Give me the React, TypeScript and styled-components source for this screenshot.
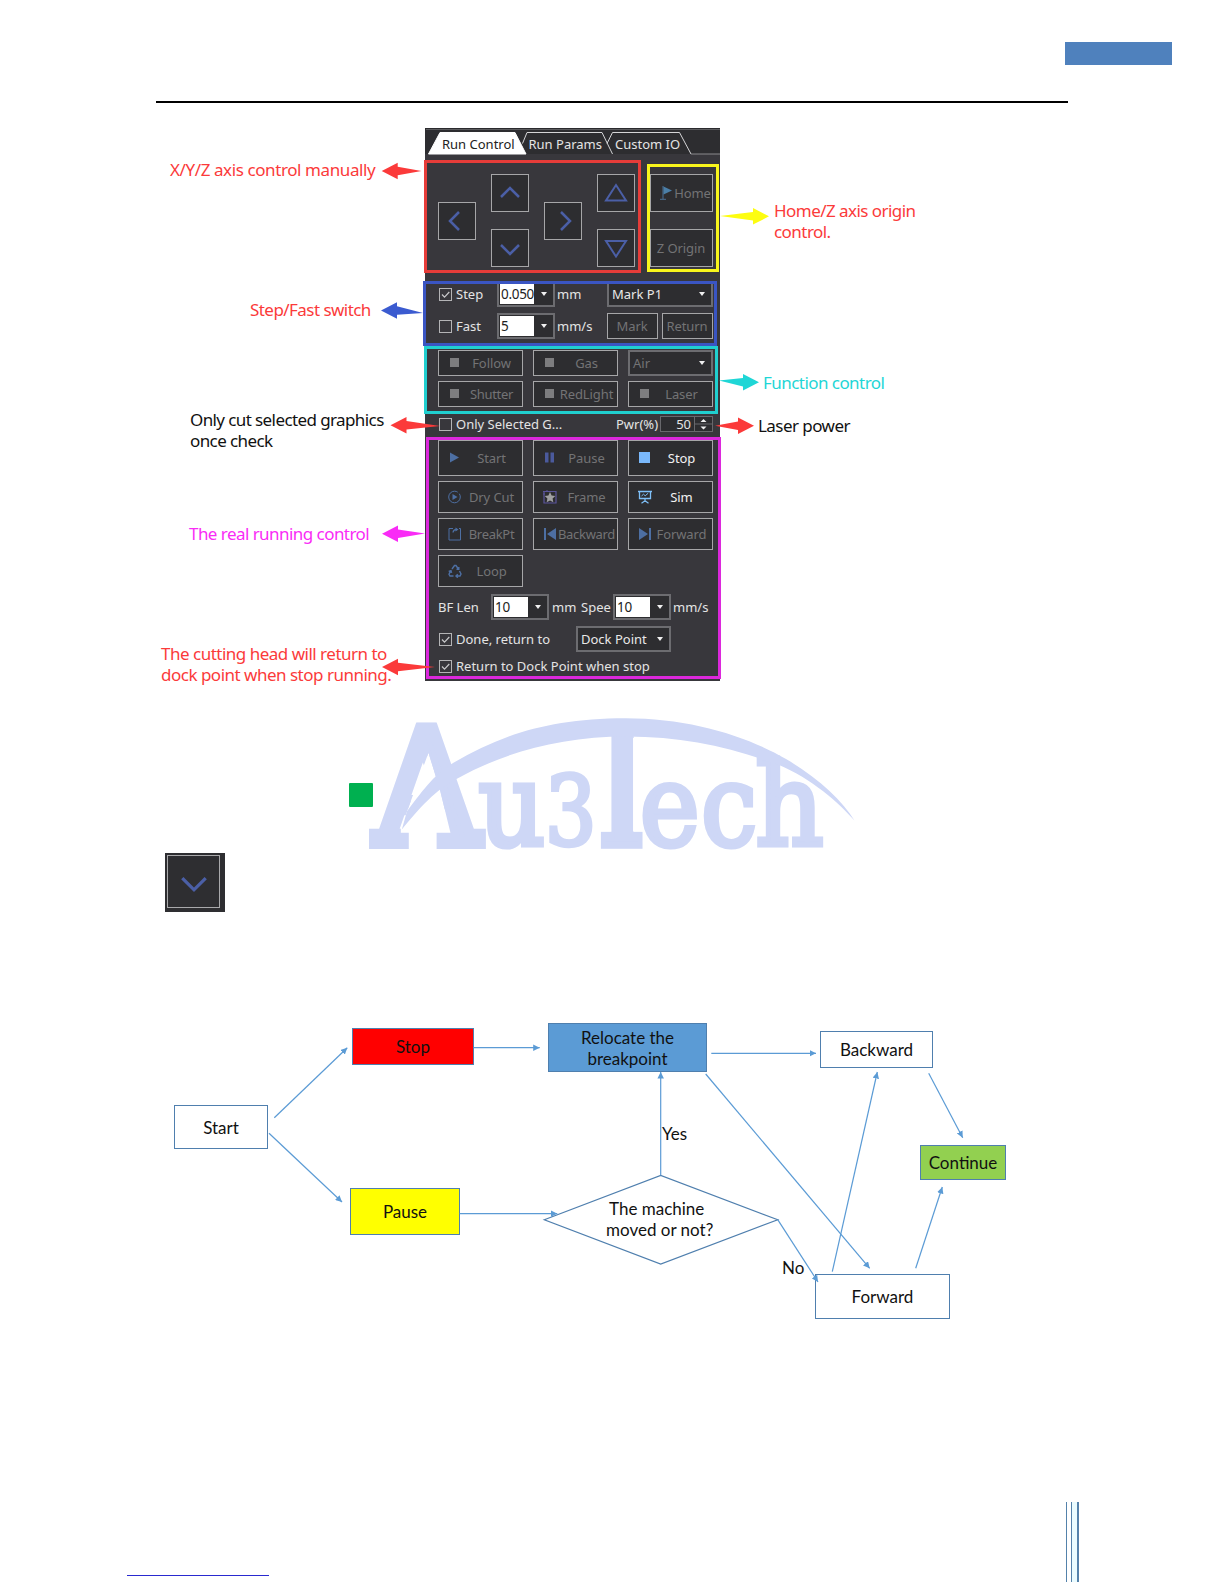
import type { ReactNode } from "react";
import styled, { createGlobalStyle } from "styled-components";

const RED = "#fb3a3a";
const BLUE = "#3b5bd0";
const CYAN = "#1fd6d6";
const MAGENTA = "#f92bf6";
const EDGE = "#5b9bd5";
const OUTLINE = "#4f7fae";
const DIM_ICON = "#4d6fa3";
const LOGO = "#ced7f6";

const GlobalStyle = createGlobalStyle`
  body {
    margin: 0;
    background: #fff;
  }
  * {
    box-sizing: border-box;
  }
`;

/* ---------- page ---------- */

const Page = styled.main`
  width: 1224px;
  height: 1584px;
  display: flex;
  flex-direction: column;
  background: #fff;
  overflow: hidden;
  font-family: "Noto Sans", sans-serif;
`;

const Header = styled.header`
  height: 128px;
  padding: 42px 52px 0 156px;
  display: flex;
  flex-direction: column;
`;

const HeaderTag = styled.div`
  width: 107px;
  height: 23px;
  align-self: flex-end;
  background: #4f81bd;
`;

const HeaderRule = styled.div`
  width: 912px;
  height: 2px;
  margin-top: 36px;
  background: #000;
`;

/* ---------- annotated panel ---------- */

const Figure = styled.section`
  position: relative;
  height: 572px;
  display: grid;
  grid-template-columns: 425px 295px 1fr;
  align-items: start;
`;

const Notes = styled.div`
  display: flex;
  flex-direction: column;
`;

const Note = styled.p<{ $gap: number; $indent: number; $color?: string; $spacing?: number }>`
  margin: ${({ $gap }) => $gap}px 0 0 ${({ $indent }) => $indent}px;
  color: ${({ $color }) => $color || "#111"};
  font-family: "Noto Sans", sans-serif;
  font-size: 17px;
  line-height: 21px;
  letter-spacing: ${({ $spacing }) => $spacing ?? -0.55}px;
  white-space: pre;
`;

const Overlay = styled.svg`
  position: absolute;
  left: 0;
  top: 0;
  pointer-events: none;
`;

const Frame = styled.div<{ $x: number; $y: number; $w: number; $h: number; $color: string }>`
  position: absolute;
  left: ${({ $x }) => $x}px;
  top: ${({ $y }) => $y}px;
  width: ${({ $w }) => $w}px;
  height: ${({ $h }) => $h}px;
  border: 3px solid ${({ $color }) => $color};
`;

const Panel = styled.div`
  position: relative;
  height: 553px;
  background: #38373c;
  color: #e4e4e4;
  font-size: 13px;
  line-height: 20px;
  display: flex;
  flex-direction: column;
  white-space: nowrap;
`;

const TabBar = styled.div`
  position: relative;
  height: 26px;
  flex: none;
  border-top: 1px solid #2b2b2e;
  background: #2d2d30;
  display: flex;
  padding-left: 17px;
`;

const TabShape = styled.svg`
  position: absolute;
  left: 0;
  top: -1px;
`;

const Tab = styled.span<{ $active?: boolean; $width: number }>`
  position: relative;
  width: ${({ $width }) => $width}px;
  padding-top: 5px;
  color: ${({ $active }) => ($active ? "#222" : "#e4e4e4")};
`;

const Body = styled.div`
  flex: 1;
  padding: 20px 7px 0 13px;
`;

const Jog = styled.div`
  display: grid;
  grid-template-columns: repeat(4, 38px) 63px;
  grid-template-rows: 38px 38px;
  grid-auto-flow: column;
  column-gap: 15px;
  row-gap: 17px;
`;

const Box = styled.button<{
  $lit?: boolean;
  $w?: number;
  $h?: number;
  $pad?: number;
  $tall?: boolean;
}>`
  width: ${({ $w }) => ($w ? `${$w}px` : "auto")};
  height: ${({ $h }) => $h ?? 38}px;
  min-width: 0;
  padding: 0 1px 0 ${({ $pad }) => $pad ?? 0}px;
  border: 1px solid #a6a6a8;
  background: #2d2d30;
  color: ${({ $lit }) => ($lit ? "#f2f2f2" : "#737375")};
  font: inherit;
  display: flex;
  align-items: center;
  justify-content: center;
  ${({ $tall }) => $tall && "grid-row: 1 / 3; align-self: center;"}
`;

const BoxText = styled.span<{ $spacing?: number }>`
  flex: 1;
  text-align: center;
  letter-spacing: ${({ $spacing }) => $spacing ?? -0.1}px;
`;

const Line = styled.div<{ $h: number; $gap?: number }>`
  height: ${({ $h }) => $h}px;
  margin-top: ${({ $gap }) => $gap ?? 0}px;
  display: flex;
  align-items: center;
`;

const Cell = styled.div<{ $w: number }>`
  width: ${({ $w }) => $w}px;
  flex: none;
  display: flex;
  align-items: center;
`;

const CheckBox = styled.span`
  width: 13px;
  height: 13px;
  margin: 0 4px 0 1px;
  flex: none;
  border: 1px solid #b4b4b6;
  display: flex;
`;

const Combo = styled.div<{ $w: number; $dim?: boolean }>`
  width: ${({ $w }) => $w}px;
  height: 26px;
  flex: none;
  border: 2px solid #6c6c70;
  background: #2d2d30;
  color: ${({ $dim }) => ($dim ? "#737375" : "#e8e8e8")};
  display: flex;
  align-items: center;
  justify-content: space-between;
  padding-right: 6px;
`;

const ComboInput = styled.span`
  width: 34px;
  height: 20px;
  margin-left: 1px;
  padding-left: 1px;
  background: #fff;
  color: #222;
  font-size: 13.5px;
  line-height: 21px;
  letter-spacing: -0.3px;
`;

const ComboText = styled.span`
  padding-left: 3px;
`;

const Caret = styled.i`
  border: 3px solid transparent;
  border-top: 4px solid #f0f0f0;
  border-bottom: 0;
`;

const ButtonGrid = styled.div<{ $gap: number; $top: number }>`
  margin-top: ${({ $top }) => $top}px;
  display: grid;
  grid-template-columns: repeat(3, 85px);
  column-gap: 10px;
  row-gap: ${({ $gap }) => $gap}px;
`;

const Spinner = styled.div`
  width: 53px;
  height: 16px;
  border: 1px solid #68686c;
  background: #2d2d30;
  display: flex;
`;

const SpinnerValue = styled.span`
  flex: 1;
  padding-right: 3px;
  border-right: 1px solid #68686c;
  text-align: right;
  line-height: 15px;
`;

const SpinnerArrows = styled.svg`
  width: 17px;
  height: 14px;
`;

/* ---------- logo and tile ---------- */

const LogoRow = styled.section`
  height: 153px;
  padding-left: 349px;
  display: flex;
`;

const GreenSquare = styled.div`
  width: 24px;
  height: 24px;
  flex: none;
  margin-top: 83px;
  border-radius: 1px;
  background: #00b050;
`;

const LogoArt = styled.svg`
  flex: none;
  margin-left: -4px;
`;

const Tile = styled.div`
  width: 60px;
  height: 59px;
  margin-left: 165px;
  padding: 2px;
  background: #2e2e31;
`;

const TileInner = styled.div`
  width: 53px;
  height: 53px;
  border: 1.5px solid #a9a9ab;
  display: flex;
  align-items: center;
  justify-content: center;
`;

/* ---------- flow chart ---------- */

const Chart = styled.section`
  position: relative;
  width: 1224px;
  height: 340px;
  margin-top: 98px;
  font-family: Lato, sans-serif;
  font-size: 17px;
  line-height: 21px;
  color: #111;
`;

const Node = styled.div<{ $x: number; $y: number; $w: number; $h: number; $fill?: string }>`
  position: absolute;
  left: ${({ $x }) => $x}px;
  top: ${({ $y }) => $y}px;
  width: ${({ $w }) => $w}px;
  height: ${({ $h }) => $h}px;
  border: 1px solid ${OUTLINE};
  background: ${({ $fill }) => $fill || "#fff"};
  display: flex;
  align-items: center;
  justify-content: center;
  text-align: center;
  white-space: pre;
`;

const EdgeLabel = styled.span<{ $x: number; $y: number }>`
  position: absolute;
  left: ${({ $x }) => $x}px;
  top: ${({ $y }) => $y}px;
  white-space: pre;
`;

/* ---------- footer ---------- */

const Footer = styled.footer`
  flex: 1;
  display: flex;
  align-items: flex-end;
  justify-content: space-between;
  padding: 0 145px 2px 127px;
`;

const FootRule = styled.div`
  width: 142px;
  height: 1px;
  margin-bottom: 6px;
  background: #2a2ad0;
`;

const Bars = styled.div`
  width: 13px;
  height: 80px;
  border: solid #5482ab;
  border-width: 0 2px 0 1px;
  display: flex;
  justify-content: flex-end;
  &::before {
    content: "";
    width: 5px;
    border-left: 1px solid #5482ab;
    background: #eafcff;
  }
`;

/* ---------- icons ---------- */

const IconSvg = styled.svg`
  width: 14px;
  height: 14px;
  flex: none;
`;

const Icon = ({ children }: { children: ReactNode }) => (
  <IconSvg viewBox="0 0 14 14" fill="none" stroke={DIM_ICON}>
    {children}
  </IconSvg>
);

const CHEVRONS = {
  left: "M12 1 3 10l9 9",
  right: "M8 1l9 9-9 9",
  up: "M1 14l9-9 9 9",
  down: "M1 7l9 9 9-9",
};

const Chevron = ({ dir, size = 20 }: { dir: keyof typeof CHEVRONS; size?: number }) => (
  <svg width={size} height={size} viewBox="0 0 20 20" fill="none">
    <path d={CHEVRONS[dir]} stroke="#4b5fa6" strokeWidth={2.5} />
  </svg>
);

const Triangle = ({ down }: { down?: boolean }) => (
  <svg width="24" height="20" viewBox="0 0 24 20" fill="none" stroke="#4b5fa6" strokeWidth={2}>
    <path d={down ? "M2 3h20L12 18.500z" : "M2 17.500h20L12 2z"} />
  </svg>
);

const icons = {
  square: (
    <Icon>
      <path d="M2 2h9v9H2z" fill="#7d7d7f" stroke="none" />
    </Icon>
  ),
  start: (
    <Icon>
      <path d="M2 1.500l9 5-9 5z" fill={DIM_ICON} stroke="none" />
    </Icon>
  ),
  pause: (
    <Icon>
      <path d="M2 1.500h3.500v10H2zM7.500 1.500H11v10H7.500z" fill="#4b5a9c" stroke="none" />
    </Icon>
  ),
  stop: (
    <Icon>
      <path d="M1 1h11v11H1z" fill="#7ab8fb" stroke="none" />
    </Icon>
  ),
  dry: (
    <Icon>
      <circle cx="6.500" cy="7" r="5.800" strokeDasharray="30 2" />
      <path d="M4.500 4l5 3-5 3z" fill={DIM_ICON} stroke="none" />
    </Icon>
  ),
  frame: (
    <Icon>
      <path d="M1 1.500h12v11.500H1z" stroke="#5b559b" strokeWidth="1.200" />
      <path d="M0 4h2M0 1.500h2M4 0v2" stroke="#5b559b" />
      <path
        d="M7 2l1.600 3.400 3.700.5-2.700 2.600.7 3.700L7 10.400l-3.300 1.800.7-3.700-2.700-2.600 3.700-.5z"
        fill="#a0a0a2"
        stroke="none"
      />
    </Icon>
  ),
  sim: (
    <Icon>
      <g stroke="#7fc0f8">
        <path d="M0 1.500h14M1.500 1.500v7h11v-7M7 8.500v3M3.500 13.200L7 10.800l3.500 2.400" strokeWidth="1.300" />
        <path d="M3.500 6l2-1.800 1.700 1.600 3-2.600" />
      </g>
    </Icon>
  ),
  breakPt: (
    <Icon>
      <path d="M5 1.500H1v11.500h11.500V1.500H11" />
      <path d="M5 5.500c.3-2 1.500-3 3.500-3" strokeWidth="1.300" />
      <path d="M7.500.5l3 2-3 2z" fill={DIM_ICON} stroke="none" />
    </Icon>
  ),
  backward: (
    <Icon>
      <path d="M1 1h2v12H1zM13 1v12L4 7z" fill={DIM_ICON} stroke="none" />
    </Icon>
  ),
  forward: (
    <Icon>
      <path d="M11 1h2v12h-2zM1 1v12l9-6z" fill={DIM_ICON} stroke="none" />
    </Icon>
  ),
  loop: (
    <Icon>
      <path
        d="M4 5l2.500-3.500h1.500L10 4.500M10.800 3v2.200H8.500M11.500 7l1.500 3-1 2H8.500M9.800 10.300L8 12l1.800 1.700M5.500 12H2L1 10.300 2.700 7M.7 7.500L3 6.700l.6 2.200"
        strokeWidth="1.400"
      />
    </Icon>
  ),
  flag: (
    <Icon>
      <path d="M3 0v13M0 13.300h6" stroke="#4b7196" />
      <path d="M3.500.5l8.500 4-8.500 4z" fill="#4b7fa8" stroke="none" />
    </Icon>
  ),
};

/* ---------- small parts ---------- */

type ActionProps = {
  icon: keyof typeof icons;
  label: string;
  h?: number;
  lit?: boolean;
  spacing?: number;
};

const Action = ({ icon, label, h = 32, lit, spacing }: ActionProps) => (
  <Box $h={h} $pad={9} $lit={lit}>
    {icons[icon]}
    <BoxText $spacing={spacing}>{label}</BoxText>
  </Box>
);

const Check = ({ label, checked }: { label: string; checked?: boolean }) => (
  <>
    <CheckBox>
      {checked && (
        <svg width="11" height="11" viewBox="0 0 11 11" fill="none">
          <path d="M2 5.500l2.500 2.700L9.300 3" stroke="#c9c9cb" strokeWidth="1.200" />
        </svg>
      )}
    </CheckBox>
    {label}
  </>
);

const NumberCombo = ({ value }: { value: string }) => (
  <Combo $w={58}>
    <ComboInput>{value}</ComboInput>
    <Caret />
  </Combo>
);

type PointerProps = { tip: [number, number]; tail: [number, number]; color: string };

// Tapered callout arrow, wide at the head and thin at the tail
const Pointer = ({ tip, tail, color }: PointerProps) => {
  const dir = Math.sign(tail[0] - tip[0]);
  const neck = tip[0] + dir * 16;
  const y = tip[1];
  const points = [
    tip,
    [neck, y - 8.3],
    [neck, y - 4.3],
    tail,
    [neck, y + 4.3],
    [neck, y + 8.3],
  ];
  return <polygon points={points.map((p) => p.join(",")).join(" ")} fill={color} />;
};

const edges = [
  [274.3, 1117.7, 347.3, 1047.7],
  [269, 1133.3, 342, 1202],
  [473.7, 1047.7, 539.7, 1047.7],
  [459.7, 1213.7, 557.3, 1213.7],
  [711.3, 1053.3, 816, 1053.3],
  [660.7, 1175.3, 660.7, 1072],
  [705.7, 1074, 869.7, 1268.3],
  [777.7, 1219.7, 818, 1282],
  [832.3, 1271.7, 877.3, 1072],
  [915.7, 1268.3, 942.3, 1187],
  [928.7, 1073.3, 962.7, 1137.7],
];

type LetterProps = {
  x: number;
  y?: number;
  sx: number;
  sy: number;
  clip?: string;
  bold?: boolean;
  weight?: number;
  children: string;
};

const Letter = ({ x, y = 143.5, sx, sy, clip, bold, weight = 4.5, children }: LetterProps) => (
  <g clipPath={clip} fontWeight={bold ? 700 : 400} strokeWidth={weight}>
    <text transform={`translate(${x} ${y}) scale(${sx} ${sy})`}>{children}</text>
  </g>
);

// The arch runs through the A as its crossbar and forms the top of the T
const Logo = () => (
  <LogoArt width="497" height="162" viewBox="29 0 490 160">
    <clipPath id="stem">
      <path d="M268 20h22v110h20v20h-60v-20h18z" />
    </clipPath>
    <clipPath id="legs">
      <path clipRule="evenodd" d="M20 22h135v128H20zM87.300 52L60 127V131H109L99 90z" />
    </clipPath>
    <g fill={LOGO} stroke={LOGO} fontFamily="'DejaVu Serif', serif" fontSize="100">
      <Letter x={34} y={141.5} sx={1.43} sy={1.57} clip="url(#legs)" weight={7.5}>A</Letter>
      <Letter x={136.500} sx={1.03} sy={1.14}>u</Letter>
      <Letter x={202.500} sx={0.8} sy={0.94}>3</Letter>
      <Letter x={242.500} sx={0.96} sy={1.65} clip="url(#stem)" bold>T</Letter>
      <Letter x={296} sx={1} sy={1.13}>e</Letter>
      <Letter x={356.500} sx={0.99} sy={1.13}>c</Letter>
      <Letter x={410} sx={1.05} sy={1.13}>h</Letter>
    </g>
    <path
      fill={LOGO}
      d="M66 110C84 86 95 72 112 62C160 34 208 18 282 18C345 18 400 35 440 58C472 77 496 99 508 119C492 101 466 78 433 64C384 46 338 36 283 36C215 36 160 53 115 78C96 87 77 108 61 128z"
    />
  </LogoArt>
);

/* ---------- sections ---------- */

const RunPanel = () => (
  <Panel>
    <TabBar>
      <TabShape width="295" height="27" fill="none" stroke="#d5d5d7">
        <path d="M1 1.500h294" stroke="#5b5b5e" />
        <path d="M3.500 26L15 4.500h75L101 26z" fill="#fff" stroke="#fff" />
        <path d="M97.500 15.500l4.500-11h75L187.500 26M182 15.500l5.500-11h67L266 26" />
        <path d="M266 26h29" stroke="#8a8a8c" />
      </TabShape>
      <Tab $active $width={86.500}>Run Control</Tab>
      <Tab $width={86.500}>Run Params</Tab>
      <Tab $width={70}>Custom IO</Tab>
    </TabBar>
    <Body>
      <Jog>
        <Box $tall><Chevron dir="left" /></Box>
        <Box><Chevron dir="up" /></Box>
        <Box><Chevron dir="down" /></Box>
        <Box $tall><Chevron dir="right" /></Box>
        <Box><Triangle /></Box>
        <Box><Triangle down /></Box>
        <Box $pad={9}>
          {icons.flag}
          <BoxText>Home</BoxText>
        </Box>
        <Box><BoxText>Z Origin</BoxText></Box>
      </Jog>

      <Line $h={26} $gap={14}>
        <Cell $w={59}><Check label="Step" checked /></Cell>
        <Cell $w={60}><NumberCombo value="0.050" /></Cell>
        <Cell $w={50}>mm</Cell>
        <Combo $w={106}>
          <ComboText>Mark P1</ComboText>
          <Caret />
        </Combo>
      </Line>
      <Line $h={26} $gap={6}>
        <Cell $w={59}><Check label="Fast" /></Cell>
        <Cell $w={60}><NumberCombo value="5" /></Cell>
        <Cell $w={50}>mm/s</Cell>
        <Cell $w={55}><Box $w={51} $h={26}><BoxText>Mark</BoxText></Box></Cell>
        <Box $w={51} $h={26}><BoxText>Return</BoxText></Box>
      </Line>

      <ButtonGrid $gap={5} $top={11}>
        <Action icon="square" label="Follow" h={26} />
        <Action icon="square" label="Gas" h={26} />
        <Combo $w={85} $dim>
          <ComboText>Air</ComboText>
          <Caret />
        </Combo>
        <Action icon="square" label="Shutter" h={26} spacing={-0.3} />
        <Action icon="square" label="RedLight" h={26} />
        <Action icon="square" label="Laser" h={26} />
      </ButtonGrid>

      <Line $h={20} $gap={7}>
        <Cell $w={178}><Check label="Only Selected G..." /></Cell>
        <Cell $w={44}>Pwr(%)</Cell>
        <Spinner>
          <SpinnerValue>50</SpinnerValue>
          <SpinnerArrows viewBox="0 0 17 14">
            <path d="M5.500 5L8.500 2l3 3zM5.500 9.500h6l-3 3z" fill="#f0f0f0" />
            <path d="M0 7h17" stroke="#68686c" />
          </SpinnerArrows>
        </Spinner>
      </Line>

      <ButtonGrid $gap={5} $top={6}>
        <Action icon="start" label="Start" h={36} />
        <Action icon="pause" label="Pause" h={36} />
        <Action icon="stop" label="Stop" h={36} lit />
        <Action icon="dry" label="Dry Cut" />
        <Action icon="frame" label="Frame" />
        <Action icon="sim" label="Sim" lit />
        <Action icon="breakPt" label="BreakPt" spacing={-0.3} />
        <Action icon="backward" label="Backward" spacing={-0.3} />
        <Action icon="forward" label="Forward" />
        <Action icon="loop" label="Loop" />
      </ButtonGrid>

      <Line $h={26} $gap={7}>
        <Cell $w={53}>BF Len</Cell>
        <Cell $w={61}><NumberCombo value="10" /></Cell>
        <Cell $w={29}>mm</Cell>
        <Cell $w={32}>Spee</Cell>
        <Cell $w={60}><NumberCombo value="10" /></Cell>
        mm/s
      </Line>
      <Line $h={26} $gap={6}>
        <Cell $w={138}><Check label="Done, return to" checked /></Cell>
        <Combo $w={95}>
          <ComboText>Dock Point</ComboText>
          <Caret />
        </Combo>
      </Line>
      <Line $h={20} $gap={4}>
        <Check label="Return to Dock Point when stop" checked />
      </Line>
    </Body>
  </Panel>
);

const FlowChart = () => (
  <Chart>
    <Node $x={174} $y={95} $w={94} $h={44}>Start</Node>
    <Node $x={352} $y={18} $w={122} $h={37} $fill="#ff0000">Stop</Node>
    <Node $x={350} $y={178} $w={110} $h={47} $fill="#ffff00">Pause</Node>
    <Node $x={548} $y={13} $w={159} $h={49} $fill="#5b9bd5">{"Relocate the\nbreakpoint"}</Node>
    <Node $x={820} $y={21} $w={113} $h={37}>Backward</Node>
    <Node $x={920} $y={135} $w={86} $h={35} $fill="#92d050">Continue</Node>
    <Node $x={815} $y={264} $w={135} $h={45}>Forward</Node>
    <Overlay width="1224" height="340" viewBox="0 1010 1224 340">
      <defs>
        <marker
          id="head"
          viewBox="0 0 6 6"
          refX="6"
          refY="3"
          markerWidth="6.500"
          markerHeight="6.500"
          markerUnits="userSpaceOnUse"
          orient="auto"
        >
          <path d="M0 0l6 3-6 3z" fill={EDGE} />
        </marker>
      </defs>
      <path
        d="M544.300 1219.700L660.700 1175.500L777.700 1219.700L660.700 1264z"
        fill="none"
        stroke={OUTLINE}
        strokeWidth="1.200"
      />
      {edges.map(([x1, y1, x2, y2]) => (
        <line
          key={`${x1}-${y1}`}
          x1={x1}
          y1={y1}
          x2={x2}
          y2={y2}
          stroke={EDGE}
          strokeWidth="1.200"
          markerEnd="url(#head)"
        />
      ))}
    </Overlay>
    <EdgeLabel $x={609} $y={188}>The machine</EdgeLabel>
    <EdgeLabel $x={606} $y={209}>moved or not?</EdgeLabel>
    <EdgeLabel $x={662} $y={113}>Yes</EdgeLabel>
    <EdgeLabel $x={782} $y={247}>No</EdgeLabel>
  </Chart>
);

const App = () => {
  return (
    <Page>
      <GlobalStyle />
      <Header>
        <HeaderTag />
        <HeaderRule />
      </Header>

      <Figure>
        <Notes>
          <Note $gap={31} $indent={170} $color={RED} $spacing={-0.4}>X/Y/Z axis control manually</Note>
          <Note $gap={119} $indent={250} $color={RED}>Step/Fast switch</Note>
          <Note $gap={89} $indent={190} $spacing={-0.6}>{"Only cut selected graphics\nonce check"}</Note>
          <Note $gap={72} $indent={189} $color={MAGENTA}>The real running control</Note>
          <Note $gap={99} $indent={161} $color={RED} $spacing={-0.5}>
            {"The cutting head will return to\ndock point when stop running."}
          </Note>
        </Notes>
        <RunPanel />
        <Notes>
          <Note $gap={72} $indent={54} $color={RED}>{"Home/Z axis origin\ncontrol."}</Note>
          <Note $gap={130} $indent={43} $color={CYAN}>Function control</Note>
          <Note $gap={22} $indent={38}>Laser power</Note>
        </Notes>

        <Frame $x={424} $y={32} $w={217} $h={113} $color="#e63c39" />
        <Frame $x={647} $y={36} $w={72} $h={108} $color="#f8f51c" />
        <Frame $x={423} $y={153} $w={294} $h={65} $color="#3a55c3" />
        <Frame $x={424} $y={218} $w={294} $h={68} $color="#20cfcf" />
        <Frame $x={426} $y={309} $w={295} $h={242} $color="#dc28dc" />
        <Overlay width="1224" height="572" viewBox="0 128 1224 572">
          <Pointer tip={[381.7, 171]} tail={[421.5, 171]} color={RED} />
          <Pointer tip={[381, 310.5]} tail={[423, 313]} color={BLUE} />
          <Pointer tip={[390.5, 425.3]} tail={[440, 426]} color={RED} />
          <Pointer tip={[382, 533.7]} tail={[425, 533.5]} color={MAGENTA} />
          <Pointer tip={[382, 667]} tail={[435, 667]} color={RED} />
          <Pointer tip={[769, 216.3]} tail={[720, 216]} color="#fdfd10" />
          <Pointer tip={[759, 382.2]} tail={[719, 380.5]} color={CYAN} />
          <Pointer tip={[754, 425.7]} tail={[715, 425.7]} color={RED} />
        </Overlay>
      </Figure>

      <LogoRow>
        <GreenSquare />
        <Logo />
      </LogoRow>
      <Tile>
        <TileInner><Chevron dir="down" size={26} /></TileInner>
      </Tile>

      <FlowChart />

      <Footer>
        <FootRule />
        <Bars />
      </Footer>
    </Page>
  );
};

export default App;
